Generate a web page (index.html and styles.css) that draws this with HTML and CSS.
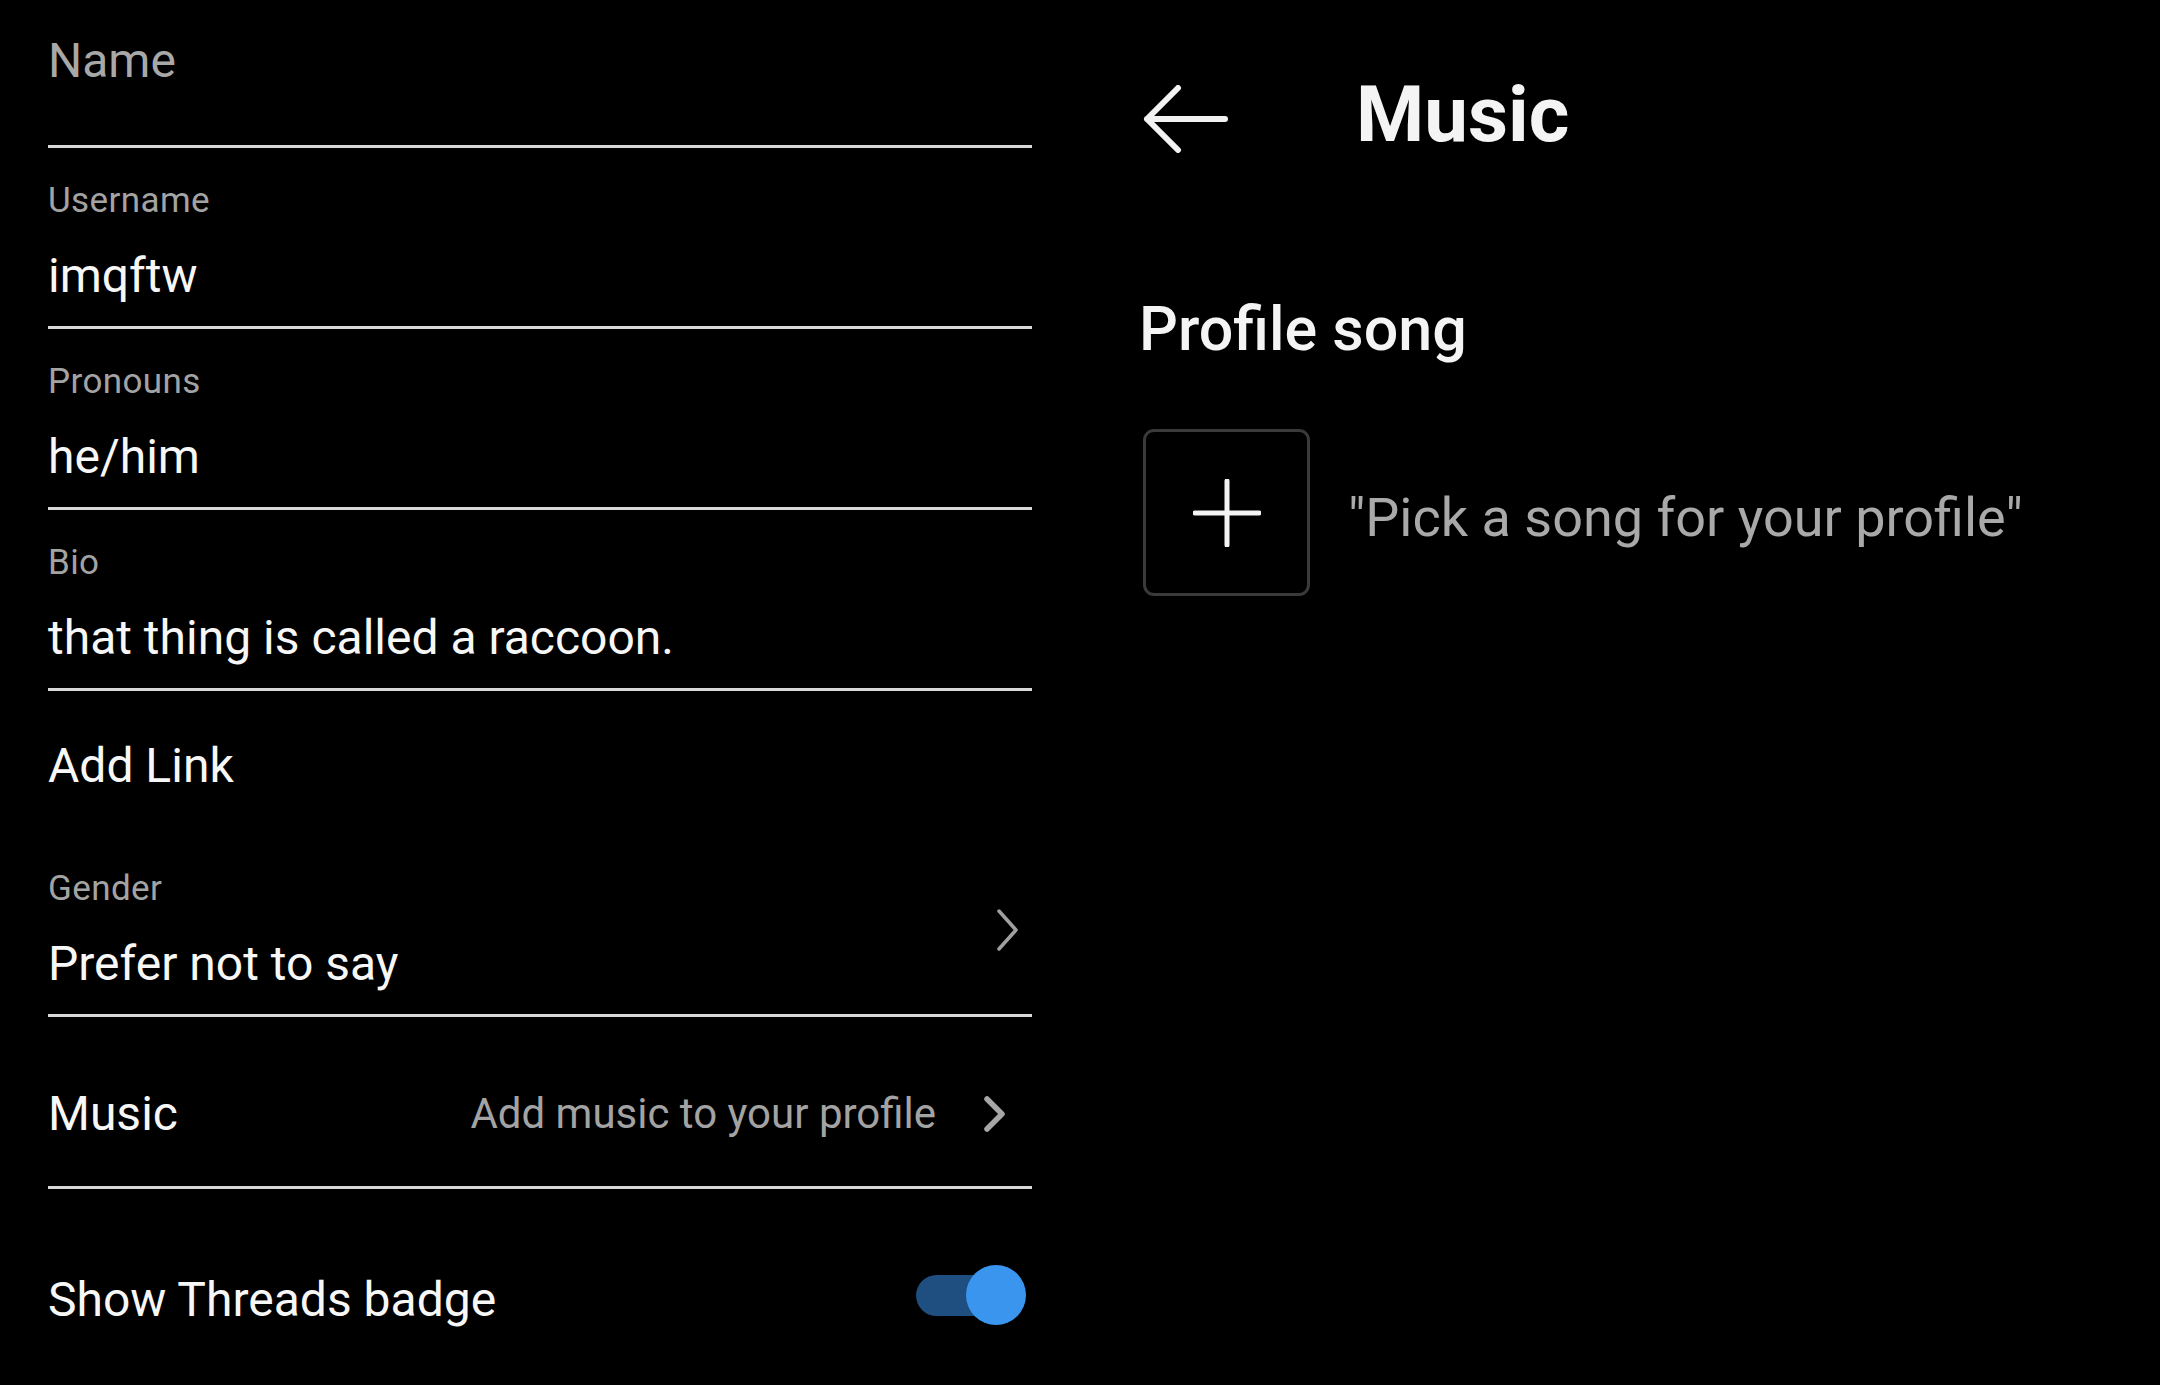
FILE: index.html
```html
<!DOCTYPE html>
<html lang="en">
<head>
<meta charset="utf-8">
<title>Edit profile – Music</title>
<link rel="stylesheet" href="styles.css">
</head>
<body>
<div class="screen">
  <section class="edit">
    <div class="field field-name">
      <div class="value placeholder">Name</div>
    </div>
    <div class="field">
      <div class="label">Username</div>
      <div class="value">imqftw</div>
    </div>
    <div class="field">
      <div class="label">Pronouns</div>
      <div class="value">he/him</div>
    </div>
    <div class="field">
      <div class="label">Bio</div>
      <div class="value">that thing is called a raccoon.</div>
    </div>
    <div class="link-row">Add Link</div>
    <div class="field field-nav">
      <div class="field-text">
        <div class="label">Gender</div>
        <div class="value">Prefer not to say</div>
      </div>
      <svg class="chev chev-thin" width="24" height="44" viewBox="0 0 24 44" aria-hidden="true">
        <polyline points="3,3 20,22 3,41" fill="none" stroke="#a0a0a0" stroke-width="3.5" stroke-linecap="round" stroke-linejoin="round"/>
      </svg>
    </div>
    <div class="music-row">
      <span class="row-title">Music</span>
      <span class="row-hint">Add music to your profile</span>
      <svg class="chev chev-bold" width="24" height="38" viewBox="0 0 24 38" aria-hidden="true">
        <polyline points="4,4 19,19 4,34" fill="none" stroke="#a6a6a6" stroke-width="5.5" stroke-linecap="round" stroke-linejoin="round"/>
      </svg>
    </div>
    <div class="toggle-row">
      <span class="row-title">Show Threads badge</span>
      <div class="toggle" role="switch" aria-checked="true">
        <span class="track"></span>
        <span class="thumb"></span>
      </div>
    </div>
  </section>

  <section class="music">
    <header class="music-header">
      <svg class="back" width="86" height="68" viewBox="0 0 86 68" aria-hidden="true">
        <path d="M4 34 H82 M35 3 L4 34 L35 65" fill="none" stroke="#f2f2f2" stroke-width="6" stroke-linecap="round" stroke-linejoin="round"/>
      </svg>
      <h1 class="music-title">Music</h1>
    </header>
    <h2 class="section-title">Profile song</h2>
    <div class="song-row">
      <div class="add-box">
        <svg width="68" height="68" viewBox="0 0 68 68" aria-hidden="true">
          <path d="M34 2 V66 M2 34 H66" fill="none" stroke="#f4f4f4" stroke-width="5" stroke-linecap="round"/>
        </svg>
      </div>
      <span class="song-hint">"Pick a song for your profile"</span>
    </div>
  </section>
</div>
</body>
</html>
```

FILE: styles.css
```css
html, body {
  margin: 0;
  padding: 0;
  background: #000;
}

body {
  width: 2160px;
  height: 1385px;
  overflow: hidden;
  font-family: Roboto, "Noto Sans", "Liberation Sans", sans-serif;
  color: #f5f5f5;
}

.screen {
  display: flex;
  align-items: flex-start;
}

/* ---------- left: edit profile ---------- */
.edit {
  width: 984px;
  margin-left: 48px;
  display: flex;
  flex-direction: column;
}

.field {
  border-bottom: 3px solid #d8d8d8;
  padding: 33px 0 22px;
}

.field-name {
  padding: 33px 0 56px;
}

.label {
  font-size: 35px;
  line-height: 40px;
  letter-spacing: 0.4px;
  color: #a3a3a3;
  margin-bottom: 27px;
}

.value {
  font-size: 48px;
  line-height: 56px;
  color: #f7f7f7;
}

.placeholder {
  color: #a8a8a8;
}

.link-row {
  font-size: 48px;
  line-height: 56px;
  color: #f7f7f7;
  padding: 47px 0 42px;
}

.field-nav {
  display: flex;
  align-items: center;
  justify-content: space-between;
}

.chev-thin {
  margin-right: 12px;
  margin-bottom: 2px;
}

.music-row {
  display: flex;
  align-items: center;
  border-bottom: 3px solid #d8d8d8;
  padding: 69px 0 44px;
}

.row-title {
  flex: 1;
  font-size: 48px;
  line-height: 56px;
  color: #f7f7f7;
}

.row-hint {
  font-size: 42px;
  line-height: 56px;
  color: #a3a3a3;
}

.chev-bold {
  margin-left: 47px;
  margin-right: 25px;
}

.toggle-row {
  display: flex;
  align-items: center;
  padding-top: 76px;
}

.toggle {
  position: relative;
  width: 110px;
  height: 60px;
  margin-right: 6px;
  margin-bottom: 10px;
}

.track {
  position: absolute;
  left: 0;
  top: 10px;
  width: 92px;
  height: 41px;
  border-radius: 21px;
  background: #1e4f80;
}

.thumb {
  position: absolute;
  right: 0;
  top: 0;
  width: 60px;
  height: 60px;
  border-radius: 50%;
  background: #3a95ee;
}

/* ---------- right: music ---------- */
.music {
  margin-left: 111px;
  display: flex;
  flex-direction: column;
}

.music-header {
  display: flex;
  align-items: center;
  padding-top: 70px;
  height: 90px;
}

.back {
  margin-top: 8px;
  flex-shrink: 0;
}

.music-title {
  margin: 0 0 0 127px;
  font-size: 78px;
  line-height: 90px;
  font-weight: 700;
  color: #f4f4f4;
}

.section-title {
  margin: 133px 0 0 -4px;
  font-size: 61px;
  line-height: 72px;
  font-weight: 500;
  color: #f4f4f4;
}

.song-row {
  display: flex;
  align-items: center;
  margin-top: 64px;
}

.add-box {
  width: 161px;
  height: 161px;
  border: 3px solid #3a3a3a;
  border-radius: 11px;
  display: flex;
  align-items: center;
  justify-content: center;
  flex-shrink: 0;
}

.song-hint {
  margin-left: 38px;
  margin-top: 10px;
  font-size: 54px;
  line-height: 64px;
  color: #a9a9a9;
  white-space: nowrap;
}
```
